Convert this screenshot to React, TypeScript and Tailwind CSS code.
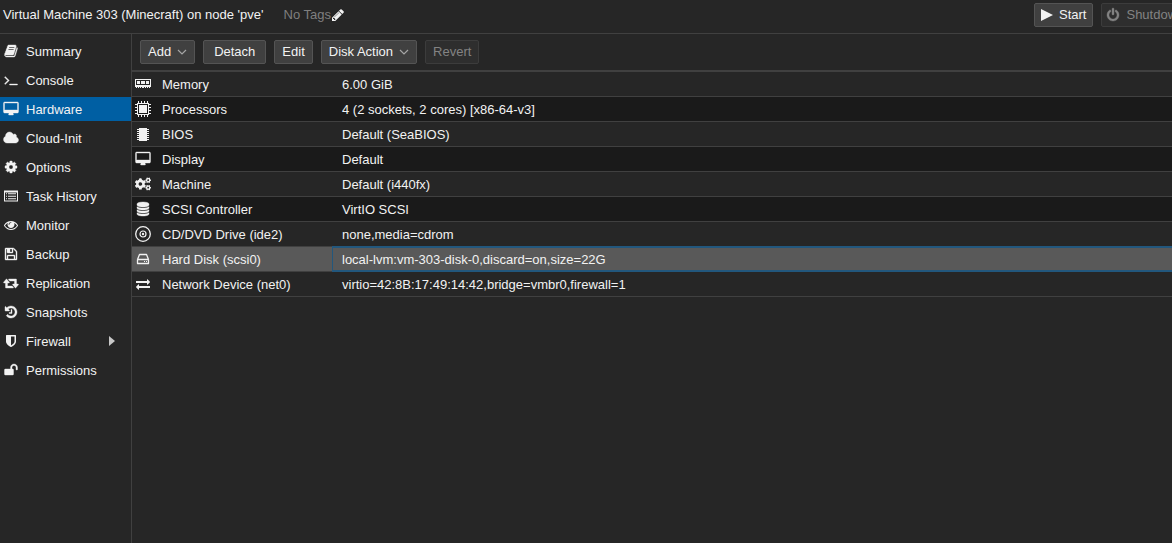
import type { ReactNode } from "react";
import { FaCogs } from "react-icons/fa";

const paths = {
  book: "M1703 478q40 57 18 129l-275 906q-19 64-76.5 107.500t-122.500 43.500h-923q-77 0-148.500-53.500t-99.500-131.500q-24-67-2-127 0-4 3-27t4-37q1-8-3-21.500t-3-19.500q2-11 8-21t16.500-23.500 16.500-23.500q23-38 45-91.500t30-91.500q3-10 .5-30t-.5-28q3-11 17-28t17-23q21-36 42-92t25-90q1-9-2.500-32t.5-28q4-13 22-30.500t22-22.500q19-26 42.500-84.500t27.500-96.500q1-8-3-25.500t-2-26.500q2-8 9-18t18-23 17-21q8-12 16.500-30.500t15-35 16-36 19.500-32 26.500-23.500 36-11.500 47.500 5.500l-1 3q38-9 51-9h761q74 0 114 56t18 130l-274 906q-36 119-71.500 153.500t-128.500 34.500h-869q-27 0-38 15-11 16-1 43 24 70 144 70h923q29 0 56-15.500t35-41.500l300-987q7-22 5-57 38 15 59 43zm-1064 2q-4 13 2 22.500t20 9.500h608q13 0 25.500-9.500t16.500-22.500l21-64q4-13-2-22.500t-20-9.500h-608q-13 0-25.500 9.500t-16.500 22.500zm-83 256q-4 13 2 22.500t20 9.500h608q13 0 25.500-9.500t16.500-22.500l21-64q4-13-2-22.500t-20-9.500h-608q-13 0-25.500 9.500t-16.500 22.500z",
  terminal: "M649 983l-466 466q-10 10-23 10t-23-10l-50-50q-10-10-10-23t10-23l393-393-393-393q-10-10-10-23t10-23l50-50q10-10 23-10t23 10l466 466q10 10 10 23t-10 23zm1079 457v64q0 14-9 23t-23 9h-960q-14 0-23-9t-9-23v-64q0-14 9-23t23-9h960q14 0 23 9t9 23z",
  desktop: "M1728 992v-832q0-13-9.500-22.500t-22.500-9.500h-1600q-13 0-22.500 9.500t-9.500 22.500v832q0 13 9.500 22.500t22.500 9.500h1600q13 0 22.500-9.500t9.500-22.500zm128-832v1088q0 66-47 113t-113 47h-544q0 37 16 77.500t32 71 16 43.500q0 26-19 45t-45 19h-512q-26 0-45-19t-19-45q0-14 16-44t32-70 16-78h-544q-66 0-113-47t-47-113v-1088q0-66 47-113t113-47h1600q66 0 113 47t47 113z",
  cloud: "M1856 1152q0 159-112.500 271.500t-271.500 112.500h-1088q-185 0-316.500-131.500t-131.500-316.500q0-132 71-241.500t187-163.500q-2-28-2-43 0-212 150-362t362-150q158 0 286.500 88t187.500 230q70-62 166-62 106 0 181 75t75 181q0 75-41 138 129 30 213 134.500t84 239.500z",
  cog: "M1152 896q0-106-75-181t-181-75-181 75-75 181 75 181 181 75 181-75 75-181zm512-109v222q0 12-8 23t-20 13l-185 28q-19 54-39 91 35 50 107 138 10 12 10 25t-9 23q-27 37-99 108t-94 71q-12 0-26-9l-138-108q-44 23-91 38-16 136-29 186-7 28-36 28h-222q-14 0-24.500-8.500t-11.500-21.500l-28-184q-49-16-90-37l-141 107q-10 9-25 9-14 0-25-11-126-114-165-168-7-10-7-23 0-12 8-23 15-21 51-66.500t54-70.500q-27-50-41-99l-183-27q-13-2-21-12.500t-8-23.500v-222q0-12 8-23t19-13l186-28q14-46 39-92-40-57-107-138-10-12-10-24 0-10 9-23 26-36 98.500-107.500t94.500-71.500q13 0 26 10l138 107q44-23 91-38 16-136 29-186 7-28 36-28h222q14 0 24.500 8.500t11.500 21.500l28 184q49 16 90 37l142-107q9-9 24-9 13 0 25 10 129 119 165 170 7 8 7 22 0 12-8 23-15 21-51 66.500t-54 70.500q26 50 41 98l183 28q13 2 21 12.500t8 23.500z",
  list: "M0 192h1792v1408h-1792zM128 448v1024h1536v-1024zM256 544h128v128h-128zM512 544h1024v128h-1024zM256 864h128v128h-128zM512 864h1024v128h-1024zM256 1184h128v128h-128zM512 1184h1024v128h-1024z",
  eye: "M1664 960q-152-236-381-353 61 104 61 225 0 185-131.500 316.500t-316.500 131.500-316.500-131.500-131.500-316.500q0-121 61-225-229 117-381 353 133 205 333.500 326.500t434.500 121.500 434.500-121.500 333.500-326.500zm-720-384q0-20-14-34t-34-14q-125 0-214.500 89.500t-89.500 214.500q0 20 14 34t34 14 34-14 14-34q0-86 61-147t147-61q20 0 34-14t14-34zm848 384q0 34-20 69-140 230-376.500 368.500t-499.500 138.500-499.500-139-376.500-368q-20-35-20-69t20-69q140-229 376.500-368t499.500-139 499.500 139 376.500 368q20 35 20 69z",
  floppy: "M512 1536h768v-384h-768v384zm896 0h128v-896q0-14-10-38.500t-20-34.500l-281-281q-10-10-34-20t-39-10v416q0 40-28 68t-68 28h-576q-40 0-68-28t-28-68v-416h-128v1280h128v-416q0-40 28-68t68-28h832q40 0 68 28t28 68v416zm-384-928v-320q0-13-9.500-22.500t-22.500-9.500h-192q-13 0-22.500 9.500t-9.500 22.500v320q0 13 9.500 22.500t22.500 9.500h192q13 0 22.500-9.500t9.500-22.500zm640 32v928q0 40-28 68t-68 28h-1344q-40 0-68-28t-28-68v-1344q0-40 28-68t68-28h928q40 0 88 20t76 48l280 280q28 28 48 76t20 88z",
  retweet: "M1216 1504q0 13-9.500 22.500t-22.500 9.500h-960q-8 0-13.500-2t-9-7-5.500-8-3-11.500-1-11.500v-600h-192q-26 0-45-19t-19-45q0-24 15-41l320-384q19-22 49-22t49 22l320 384q15 17 15 41 0 26-19 45t-45 19h-192v384h576q16 0 25 11l160 192q7 10 7 21zm640-416q0 24-15 41l-320 384q-20 23-49 23t-49-23l-320-384q-15-17-15-41 0-26 19-45t45-19h192v-384h-576q-16 0-25-12l-160-192q-7-9-7-20 0-13 9.500-22.500t22.500-9.500h960q8 0 13.500 2t9 7 5.500 8 3 11.500 1 11.500v600h192q26 0 45 19t19 45z",
  history: "M1664 896q0 156-61 298t-164 245-245 164-298 61q-172 0-327-72.500t-264-204.500q-7-10-6.500-22.500t8.500-20.500l137-138q10-9 25-9 16 2 23 12 73 95 179 147t225 52q104 0 198.500-40.500t163.500-109.500 109.500-163.500 40.500-198.500-40.500-198.500-109.500-163.500-163.500-109.500-198.500-40.500q-98 0-188 35.500t-160 101.500l137 138q31 30 14 69-17 40-59 40h-448q-26 0-45-19t-19-45v-448q0-42 40-59 39-17 69 14l130 129q107-101 244.500-156.500t284.500-55.500q156 0 298 61t245 164 164 245 61 298zm-640-288v448q0 14-9 23t-23 9h-320q-14 0-23-9t-9-23v-64q0-14 9-23t23-9h224v-352q0-14 9-23t23-9h64q14 0 23 9t9 23z",
  shield: "M1344 960v-640h-448v1137q119-63 213-137 235-184 235-360zm192-768v768q0 86-33.500 170.500t-83 150-118 127.500-126.500 103-121 77.500-89.500 49.500-42.500 20q-12 6-26 6t-26-6q-16-7-42.500-20t-89.500-49.500-121-77.500-126.500-103-118-127.500-83-150-33.500-170.500v-768q0-26 19-45t45-19h1152q26 0 45 19t19 45z",
  unlock: "M1728 576v256q0 26-19 45t-45 19h-64q-26 0-45-19t-19-45v-256q0-106-75-181t-181-75-181 75-75 181v192h96q40 0 68 28t28 68v576q0 40-28 68t-68 28h-960q-40 0-68-28t-28-68v-576q0-40 28-68t68-28h672v-192q0-185 131.500-316.500t316.500-131.500 316.500 131.500 131.500 316.500z",
  database: "M896 768q237 0 443-43t325-127v170q0 69-103 128t-280 93.500-385 34.500-385-34.500-280-93.500-103-128v-170q119 84 325 127t443 43zm0 768q237 0 443-43t325-127v170q0 69-103 128t-280 93.500-385 34.500-385-34.500-280-93.500-103-128v-170q119 84 325 127t443 43zm0-384q237 0 443-43t325-127v170q0 69-103 128t-280 93.500-385 34.500-385-34.500-280-93.500-103-128v-170q119 84 325 127t443 43zm0-1152q208 0 385 34.500t280 93.500 103 128v128q0 69-103 128t-280 93.500-385 34.500-385-34.500-280-93.500-103-128v-128q0-69 103-128t280-93.500 385-34.500z",
  exchange: "M1792 1184v192q0 13-9.500 22.500t-22.500 9.500h-1376v192q0 13-9.500 22.500t-22.500 9.500q-12 0-24-10l-319-320q-9-9-9-22 0-14 9-23l320-320q9-9 23-9 13 0 22.500 9.500t9.500 22.500v192h1376q13 0 22.500 9.500t9.500 22.500zm0-544q0 14-9 23l-320 320q-9 9-23 9-13 0-22.500-9.500t-9.500-22.500v-192h-1376q-13 0-22.500-9.500t-9.500-22.500v-192q0-13 9.500-22.500t22.500-9.500h1376v-192q0-14 9-23t23-9q12 0 24 10l319 319q9 9 9 23z",
  pencil: "M491 1536l91-91-235-235-91 91v107h128v128h107zm523-928q0-22-22-22-10 0-17 7l-542 542q-7 7-7 17 0 22 22 22 10 0 17-7l542-542q7-7 7-17zm-54-192l416 416-832 832h-416v-416zm683 96q0 53-37 90l-166 166-416-416 166-165q36-38 90-38 53 0 91 38l235 234q37 39 37 91z",
  power: "M1664 896q0 156-61 298t-164 245-245 164-298 61-298-61-245-164-164-245-61-298q0-182 80.500-343t226.500-270q43-32 95.500-25t83.500 50q32 42 24.500 94.500t-49.500 84.500q-98 74-151.500 181t-53.500 228q0 104 40.500 198.500t109.500 163.500 163.500 109.500 198.500 40.500 198.500-40.500 163.500-109.500 109.500-163.500 40.500-198.500q0-121-53.500-228t-151.500-181q-42-32-49.500-84.500t24.500-94.500q31-43 84-50t95 25q146 109 226.500 270t80.500 343zm-640-768v640q0 52-38 90t-90 38-90-38-38-90v-640q0-52 38-90t90-38 90 38 38 90z",
};

type IconName = keyof typeof paths;

// these already read heavy enough at 14px
const thin: IconName[] = ["list", "exchange", "pencil", "eye", "shield"];

function Icon({ name, className = "size-[14px]" }: { name: IconName; className?: string }) {
  return (
    <svg
      viewBox="0 0 1792 1792"
      className={`shrink-0 overflow-visible ${className}`}
      fill="currentColor"
      stroke="currentColor"
      strokeWidth={thin.includes(name) ? 0 : 48}
      aria-hidden="true"
    >
      <path fillRule={name === "list" ? "evenodd" : "nonzero"} d={paths[name]} />
    </svg>
  );
}

function MemoryIcon() {
  return (
    <svg viewBox="0 0 16 16" className="size-4" fill="currentColor" shapeRendering="crispEdges" aria-hidden="true">
      <path fillRule="evenodd" d="M0 3h16v8H0zM1 4v5h14V4z" />
      <path d="M2 5h3v3H2zM6 5h4v3H6zM11 5h3v3h-3zM1 11h1v1H1zM3 11h1v1H3zM5 11h1v1H5zM7 11h2v1H7zM10 11h1v1h-1zM12 11h1v1h-1zM14 11h1v1h-1z" />
    </svg>
  );
}

function CpuIcon() {
  return (
    <svg viewBox="0 0 16 16" className="size-4" fill="currentColor" shapeRendering="crispEdges" aria-hidden="true">
      <path fillRule="evenodd" d="M2 2h12v12H2zM3 3v10h10V3z" />
      <path d="M4 4h8v8H4zM3 0h1v2H3zM6 0h1v2H6zM9 0h1v2H9zM12 0h1v2h-1zM3 14h1v2H3zM6 14h1v2H6zM9 14h1v2H9zM12 14h1v2h-1zM0 3h2v1H0zM0 6h2v1H0zM0 9h2v1H0zM0 12h2v1H0zM14 3h2v1h-2zM14 6h2v1h-2zM14 9h2v1h-2zM14 12h2v1h-2z" />
    </svg>
  );
}

function ChipIcon() {
  return (
    <svg viewBox="0 0 14 14" className="size-[14px]" fill="currentColor" shapeRendering="crispEdges" aria-hidden="true">
      <path d="M3 1h8v13H3zM1 2h2v1H1zM1 4h2v1H1zM1 6h2v1H1zM1 8h2v1H1zM1 10h2v1H1zM1 12h2v1H1zM11 2h2v1h-2zM11 4h2v1h-2zM11 6h2v1h-2zM11 8h2v1h-2zM11 10h2v1h-2zM11 12h2v1h-2z" />
    </svg>
  );
}

function DiscIcon() {
  return (
    <svg viewBox="0 0 16 16" className="size-4" fill="none" stroke="currentColor" aria-hidden="true">
      <circle cx="8" cy="8" r="7.300" strokeWidth="1.3" />
      <circle cx="8" cy="8" r="3" strokeWidth="1.2" />
      <circle cx="8" cy="8" r="1.200" fill="currentColor" stroke="none" />
    </svg>
  );
}

function DriveIcon() {
  return (
    <svg viewBox="0 0 14 14" className="size-[14px]" fill="none" stroke="currentColor" aria-hidden="true">
      <path d="M1.500 7.500h11v4h-11zM1.500 7.500l2-5h7l2 5" strokeWidth="1.3" strokeLinejoin="round" />
      <path d="M8 9h1v1H8zM10 9h1v1h-1z" fill="currentColor" stroke="none" />
    </svg>
  );
}

const nav: { label: string; icon: IconName; submenu?: boolean }[] = [
  { label: "Summary", icon: "book" },
  { label: "Console", icon: "terminal" },
  { label: "Hardware", icon: "desktop" },
  { label: "Cloud-Init", icon: "cloud" },
  { label: "Options", icon: "cog" },
  { label: "Task History", icon: "list" },
  { label: "Monitor", icon: "eye" },
  { label: "Backup", icon: "floppy" },
  { label: "Replication", icon: "retweet" },
  { label: "Snapshots", icon: "history" },
  { label: "Firewall", icon: "shield", submenu: true },
  { label: "Permissions", icon: "unlock" },
];

const hardware: { label: string; icon: ReactNode; value: string }[] = [
  { label: "Memory", icon: <MemoryIcon />, value: "6.00 GiB" },
  { label: "Processors", icon: <CpuIcon />, value: "4 (2 sockets, 2 cores) [x86-64-v3]" },
  { label: "BIOS", icon: <ChipIcon />, value: "Default (SeaBIOS)" },
  { label: "Display", icon: <Icon name="desktop" />, value: "Default" },
  { label: "Machine", icon: <FaCogs className="size-4" />, value: "Default (i440fx)" },
  { label: "SCSI Controller", icon: <Icon name="database" />, value: "VirtIO SCSI" },
  { label: "CD/DVD Drive (ide2)", icon: <DiscIcon />, value: "none,media=cdrom" },
  { label: "Hard Disk (scsi0)", icon: <DriveIcon />, value: "local-lvm:vm-303-disk-0,discard=on,size=22G" },
  { label: "Network Device (net0)", icon: <Icon name="exchange" />, value: "virtio=42:8B:17:49:14:42,bridge=vmbr0,firewall=1" },
];

const selected = "Hard Disk (scsi0)";

function ToolButton({
  children,
  className = "px-[7px]",
  disabled,
  menu,
}: {
  children: ReactNode;
  className?: string;
  disabled?: boolean;
  menu?: boolean;
}) {
  return (
    <button
      type="button"
      disabled={disabled}
      aria-haspopup={menu ? "menu" : undefined}
      className={`flex h-6 shrink-0 items-center justify-center rounded-xs border whitespace-nowrap ${
        disabled ? "border-[#3c3c3c] bg-[#2e2e2e] text-[#838383]" : "border-[#545454] bg-[#404040] text-[#f2f2f2]"
      } ${className}`}
    >
      {children}
      {menu && (
        <svg viewBox="0 0 10 6" className="ml-[6px] h-[6px] w-[10px]" fill="none" stroke="#a5a5a5" aria-hidden="true">
          <path d="M1 1l4 4 4-4" strokeWidth="1.2" />
        </svg>
      )}
    </button>
  );
}

export default function App() {
  return (
    <div className="flex min-h-screen flex-col bg-[#262626] font-['Liberation_Sans',Arial,sans-serif] text-[13px] leading-4 text-[#f2f2f2]">
      <header className="flex overflow-hidden border-b border-[#404040] pt-[3px] pb-[6px] pl-[3px]">
        <div className="flex min-w-0 flex-1 items-center gap-5 whitespace-nowrap">
          <h1>Virtual Machine 303 (Minecraft) on node 'pve'</h1>
          <button type="button" className="flex items-center text-[#7f7f7f]">
            No Tags
            <Icon name="pencil" className="size-[14px] text-[#f2f2f2]" />
          </button>
        </div>
        <div className="flex w-[138px] shrink-0 gap-2">
          <ToolButton className="gap-[6px] px-[6px]">
            <svg viewBox="0 0 12 12" className="size-3" fill="currentColor" aria-hidden="true">
              <path d="M0 0l12 6-12 6z" />
            </svg>
            Start
          </ToolButton>
          <ToolButton disabled className="gap-[6px] px-1">
            <Icon name="power" />
            Shutdown
          </ToolButton>
        </div>
      </header>

      <div className="flex flex-1">
        <nav className="w-[132px] shrink-0 border-r border-[#404040] pt-[5px]">
          <ul className="flex flex-col gap-[5px]">
            {nav.map((item) => (
              <li key={item.label}>
                <a
                  href="#"
                  aria-current={item.label === "Hardware" ? "page" : undefined}
                  className={`flex h-6 items-center pr-4 pl-1 ${item.label === "Hardware" ? "bg-[#005fa3]" : ""}`}
                >
                  <Icon name={item.icon} />
                  <span className="ml-2 flex-1 pt-[2px]">{item.label}</span>
                  {item.submenu && (
                    <svg viewBox="0 0 6 10" className="h-[10px] w-[6px]" fill="#c8c8c8" aria-hidden="true">
                      <path d="M0 0l6 5-6 5z" />
                    </svg>
                  )}
                </a>
              </li>
            ))}
          </ul>
        </nav>

        <main className="min-w-0 flex-1">
          <div className="flex gap-2 border-b-2 border-[#404040] px-2 py-[6px]">
            <ToolButton menu>Add</ToolButton>
            <ToolButton className="px-[10px]">Detach</ToolButton>
            <ToolButton>Edit</ToolButton>
            <ToolButton menu>Disk Action</ToolButton>
            <ToolButton disabled>Revert</ToolButton>
          </div>
          <table className="w-full table-fixed border-separate border-spacing-0">
            <colgroup>
              <col className="w-[200px]" />
              <col />
            </colgroup>
            <tbody>
              {hardware.map((row) => (
                <tr
                  key={row.label}
                  aria-selected={row.label === selected}
                  className={row.label === selected ? "bg-[#595959]" : "odd:bg-[#262626] even:bg-[#1a1a1a]"}
                >
                  <th scope="row" className="h-[25px] border-b border-[#404040] p-0 text-left font-normal">
                    <div className="flex items-center gap-[11px] pl-[3px]">
                      <span className="flex w-4 shrink-0 justify-center">{row.icon}</span>
                      <span className="pt-[2px]">{row.label}</span>
                    </div>
                  </th>
                  <td
                    className={`h-[25px] truncate border-b px-[10px] pt-[2px] pb-0 ${
                      row.label === selected
                        ? "border-[#22577d] shadow-[0_-1px_0_#22577d,inset_1px_1px_0_#22577d,inset_0_-1px_0_#22577d]"
                        : "border-[#404040]"
                    }`}
                  >
                    {row.value}
                  </td>
                </tr>
              ))}
            </tbody>
          </table>
        </main>
      </div>
    </div>
  );
}
